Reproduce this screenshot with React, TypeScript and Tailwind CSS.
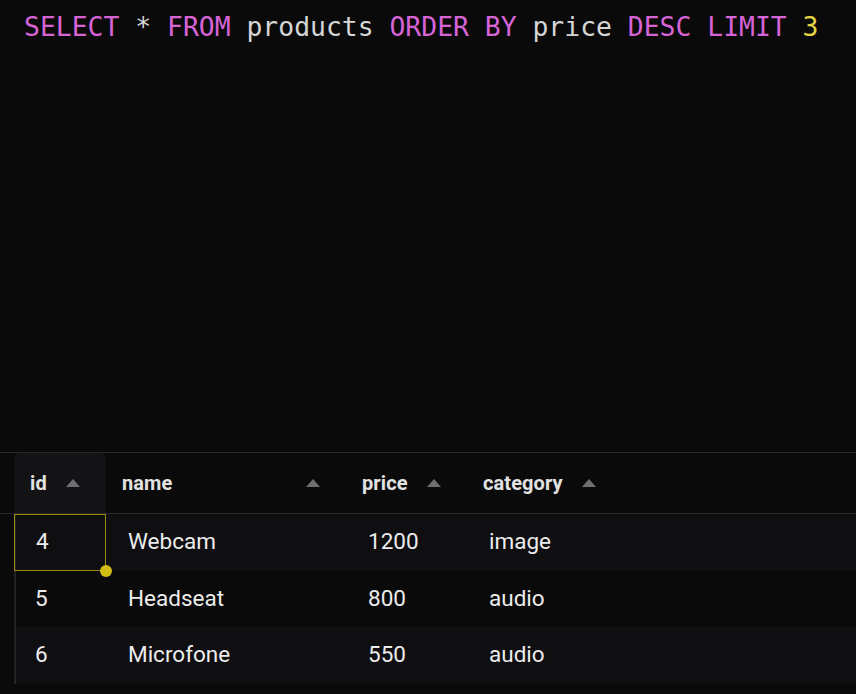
import React from 'react';

const cols = [
  { key: 'id', label: 'id', w: 'w-[92px]' },
  { key: 'name', label: 'name', w: 'w-[240px]' },
  { key: 'price', label: 'price', w: 'w-[121px]' },
  { key: 'category', label: 'category', w: 'w-[155px]' },
];

const rows = [
  { id: 4, name: 'Webcam', price: 1200, category: 'image' },
  { id: 5, name: 'Headseat', price: 800, category: 'audio' },
  { id: 6, name: 'Microfone', price: 550, category: 'audio' },
];

function SortArrow() {
  return (
    <svg width="14" height="8" viewBox="0 0 14 8" className="shrink-0">
      <polygon points="7,0 14,8 0,8" fill="#6f6f72" />
    </svg>
  );
}

export default function App() {
  return (
    <div className="flex h-[694px] w-[856px] flex-col overflow-hidden bg-[#0a0a0b]">
      {/* query editor */}
      <div className="h-[452px] px-[24px] pt-[9px]">
        <pre className="font-['DejaVu_Sans_Mono',monospace] text-[26.4px] leading-[36px] text-[#d6d6d6]">
          <span className="text-[#d764d6]">SELECT</span> * <span className="text-[#d764d6]">FROM</span> products{' '}
          <span className="text-[#d764d6]">ORDER BY</span> price <span className="text-[#d764d6]">DESC LIMIT</span>{' '}
          <span className="text-[#e3d53f]">3</span>
        </pre>
      </div>

      {/* results grid */}
      <div className="border-t border-[#29292c] font-['Roboto',sans-serif]">
        <div className="flex h-[61px] border-b border-[#29292c] pl-[14px]">
          {cols.map((c, i) => (
            <div
              key={c.key}
              className={`${c.w} flex items-center justify-between pl-[16px] pr-[26px] ${
                i === 0 ? 'rounded-t-md bg-[#131215]' : ''
              }`}
            >
              <span className="text-[20px] font-bold tracking-[0.1px] text-[#e2e2e2]">{c.label}</span>
              <SortArrow />
            </div>
          ))}
        </div>

        <div className="ml-[14px] border-l-2 border-[#232325]">
          {rows.map((r, i) => (
            <div
              key={r.id}
              className={`flex h-[56.5px] items-center text-[22.5px] text-[#ececec] ${
                i % 2 === 0 ? 'bg-[#0f0e11]' : 'bg-[#0a0a0b]'
              }`}
            >
              <div
                className={`relative -ml-[2px] flex h-full w-[92px] items-center pl-[21px] ${
                  i === 0 ? 'border border-[#9c8a12]' : ''
                }`}
              >
                {r.id}
                {i === 0 && (
                  <span className="absolute -bottom-[7px] -right-[7px] h-[12px] w-[12px] rounded-full bg-[#d2bb12]" />
                )}
              </div>
              <div className="w-[240px] pl-[22px]">{r.name}</div>
              <div className="w-[121px] pl-[22px]">{r.price}</div>
              <div className="w-[155px] pl-[22px]">{r.category}</div>
            </div>
          ))}
        </div>
      </div>
    </div>
  );
}
